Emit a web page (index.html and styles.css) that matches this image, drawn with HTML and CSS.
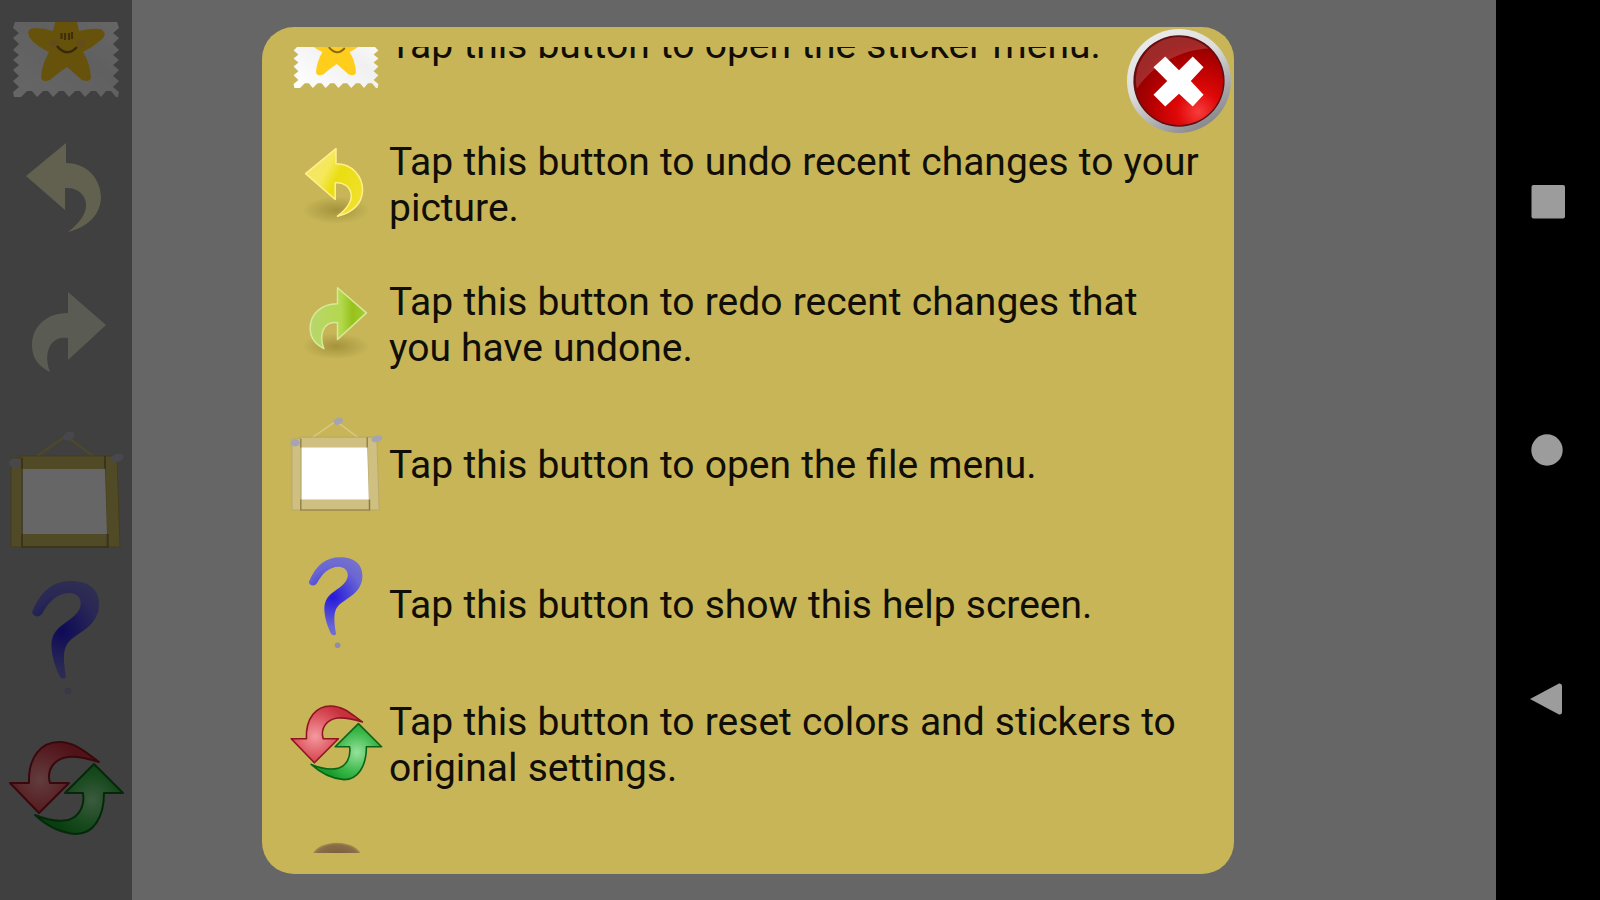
FILE: index.html
```
<!DOCTYPE html>
<html lang="en">
<head>
    <meta charset="UTF-8">
    <meta name="viewport" content="width=device-width, initial-scale=1.0">
    <title>Help</title>
    <link rel="stylesheet" href="styles.css">
</head>
<body>
    <!-- Shared icons -->
    <svg class="defs" width="0" height="0">
        <defs>
            <linearGradient id="paper" x1="0" y1="1" x2="1" y2="0">
                <stop offset="0" stop-color="#ffffff"/>
                <stop offset="0.6" stop-color="#f0f0f0"/>
                <stop offset="1" stop-color="#ffffff"/>
            </linearGradient>
            <linearGradient id="yellowArrow" x1="0" y1="0" x2="1" y2="0.6">
                <stop offset="0" stop-color="#f4e46c"/>
                <stop offset="0.4" stop-color="#f6e85c"/>
                <stop offset="0.6" stop-color="#eadd10"/>
                <stop offset="1" stop-color="#f0e02a"/>
            </linearGradient>
            <linearGradient id="greenArrow" x1="0" y1="0" x2="1" y2="0">
                <stop offset="0" stop-color="#b9d66c"/>
                <stop offset="0.55" stop-color="#b4d84e"/>
                <stop offset="0.75" stop-color="#96c21a"/>
                <stop offset="1" stop-color="#a6cc38"/>
            </linearGradient>
            <radialGradient id="shade">
                <stop offset="0" stop-color="#6e5f10" stop-opacity="0.4"/>
                <stop offset="1" stop-color="#6e5f10" stop-opacity="0"/>
            </radialGradient>
            <radialGradient id="ink" gradientUnits="userSpaceOnUse" cx="62" cy="69" r="50">
                <stop offset="0" stop-color="#2418dc"/>
                <stop offset="0.3" stop-color="#4038d8"/>
                <stop offset="0.75" stop-color="#6a66d4"/>
                <stop offset="1" stop-color="#7470cc"/>
            </radialGradient>
            <radialGradient id="red" gradientUnits="userSpaceOnUse" cx="40" cy="68" r="42">
                <stop offset="0" stop-color="#f49a9e"/>
                <stop offset="0.6" stop-color="#dc5660"/>
                <stop offset="1" stop-color="#c8323e"/>
            </radialGradient>
            <radialGradient id="green" gradientUnits="userSpaceOnUse" cx="92" cy="88" r="42">
                <stop offset="0" stop-color="#96e29c"/>
                <stop offset="0.6" stop-color="#3cb84a"/>
                <stop offset="1" stop-color="#189c2a"/>
            </radialGradient>
            <linearGradient id="rim" x1="0" y1="0" x2="0.6" y2="1">
                <stop offset="0" stop-color="#f0f0f0"/>
                <stop offset="0.5" stop-color="#dcdcdc"/>
                <stop offset="1" stop-color="#8c8c90"/>
            </linearGradient>
            <radialGradient id="closeRed" cx="0.72" cy="0.85" r="0.8">
                <stop offset="0" stop-color="#f83c3c"/>
                <stop offset="0.3" stop-color="#e00808"/>
                <stop offset="0.65" stop-color="#b80000"/>
                <stop offset="1" stop-color="#8c0000"/>
            </radialGradient>
            <radialGradient id="brown">
                <stop offset="0" stop-color="#76583c"/>
                <stop offset="0.85" stop-color="#8a6e48"/>
                <stop offset="1" stop-color="#a68c50"/>
            </radialGradient>
        </defs>

        <symbol id="icon-sticker" viewBox="0 0 132 150">
            <path fill="url(#paper)" d="M15 60H117L119 66L113 71L119 76L113 82L119 88L113 93L119 98L113 103L119 108L113 114L119 119L113 125L119 130L118 135H116L111 129H106L101 135L96 129H91L85 135L80 129H75L69 135L64 129H59L53 135L48 129H43L37 135L32 129H27L21 135H14L13 130L19 125L13 119L19 114L13 108L19 103L13 98L19 93L13 88L19 82L13 76L19 71L13 66Z"/>
            <path fill="#ffce1c" d="M55 60H77L79 69Q91 66 100 67Q109 71 101 78Q93 85 83 90Q90 101 91 115Q90 121 82 118Q74 111 67 105Q58 111 50 118Q42 121 41 115Q42 102 49 90Q36 84 30 76Q25 67 34 66Q44 66 53 69Z"/>
            <circle cx="54" cy="81" r="4.5" fill="#ffbe3c"/>
            <circle cx="81" cy="81" r="4.5" fill="#ffbe3c"/>
            <path d="M61.5 71V77M65 71V78M69 71V78M72 70V77" stroke="#a07818" stroke-width="2.2"/>
            <path d="M57 84Q67 96 77 85" fill="none" stroke="#8a6818" stroke-width="2.5"/>
        </symbol>

        <symbol id="icon-undo" viewBox="0 0 132 150">
            <ellipse class="shade" cx="66" cy="112" rx="44" ry="18" fill="url(#shade)"/>
            <path class="arrow undo" d="M26 64L66 31V51C88 51 101 68 101 86C100 103 88 115 68 120C81 110 87 100 86 91C84 80 75 75 65 76V98Z"/>
        </symbol>

        <symbol id="icon-redo" viewBox="0 0 132 150">
            <ellipse class="shade" cx="66" cy="107" rx="44" ry="17" fill="url(#shade)"/>
            <path class="arrow redo" d="M106 63L68 30V51C45 51 32 66 32 83C32 96 38 104 50 110C45 97 47 86 53 80C57 76 62 75 68 76V98Z"/>
        </symbol>

        <symbol id="icon-frame" viewBox="0 0 132 150">
            <path class="string" d="M37 44L66 24L93 44"/>
            <path class="wood" d="M20 44H110V58H20Z"/>
            <path class="wood" d="M20 121H110V135H20Z"/>
            <path class="wood" d="M11 46H22V135H11Z"/>
            <path class="wood" d="M105 44H117L120 135H107Z"/>
            <path fill="#ffffff" d="M23 57H105L107 122H23Z"/>
            <path class="edge" d="M22 46V57M22 122V135H108V122M105 44V57"/>
            <g class="nail">
                <ellipse cx="69" cy="24" rx="6" ry="4" transform="rotate(-25 69 24)"/>
                <ellipse cx="15" cy="51" rx="6" ry="4.5"/>
                <ellipse cx="117" cy="46" rx="7" ry="4" transform="rotate(-15 117 46)"/>
            </g>
        </symbol>

        <symbol id="icon-help" viewBox="0 0 132 150">
            <path fill="url(#ink)" d="M32 50C41 28 54 19 71 19C89 19 100 28 99 44C98 61 84 68 73 76C62 84 63 95 66 115Q64 118 60 115C53 101 49 83 53 74C58 63 69 60 76 52C84 44 82 32 70 31C56 31 48 41 42 52C39 56 33 55 32 50Z"/>
            <circle cx="68" cy="129" r="3.5" fill="#8c8cb4"/>
        </symbol>

        <symbol id="icon-reset" viewBox="0 0 132 150">
            <path fill="url(#red)" stroke="#8e1420" stroke-width="2" stroke-linejoin="round" d="M10 71H29C28 44 42 30 59 30C75 30 85 40 99 50C86 46 77 44 68 45C54 47 46 58 50 71H69L39 101Z"/>
            <path fill="url(#green)" stroke="#0a6418" stroke-width="2" stroke-linejoin="round" d="M94 52L123 81H104C104 106 93 122 76 122C59 121 47 114 35 103C47 108 57 110 68 108C79 105 85 94 83 81H65Z"/>
        </symbol>

        <symbol id="icon-next" viewBox="0 0 132 150">
            <ellipse cx="67" cy="44" rx="31" ry="18" fill="url(#brown)"/>
        </symbol>
    </svg>

    <div class="screen">
        <div class="app">
            <div class="toolbar">
                <svg class="tool"><use href="#icon-sticker"/></svg>
                <svg class="tool disabled"><use href="#icon-undo"/></svg>
                <svg class="tool disabled"><use href="#icon-redo"/></svg>
                <svg class="tool"><use href="#icon-frame"/></svg>
                <svg class="tool"><use href="#icon-help"/></svg>
                <svg class="tool"><use href="#icon-reset"/></svg>
            </div>
            <div class="canvas"></div>

            <!-- Help dialog over the app -->
            <div class="overlay">
                <div class="dialog">
                    <div class="scroll">
                        <ul class="help-list">
                            <li><svg class="icon sticker"><use href="#icon-sticker"/></svg><p>Tap this button to open the sticker menu.</p></li>
                            <li><svg class="icon small"><use href="#icon-undo"/></svg><p>Tap this button to undo recent changes to your picture.</p></li>
                            <li><svg class="icon small"><use href="#icon-redo"/></svg><p>Tap this button to redo recent changes that you have undone.</p></li>
                            <li><svg class="icon"><use href="#icon-frame"/></svg><p>Tap this button to open the file menu.</p></li>
                            <li><svg class="icon"><use href="#icon-help"/></svg><p>Tap this button to show this help screen.</p></li>
                            <li><svg class="icon"><use href="#icon-reset"/></svg><p>Tap this button to reset colors and stickers to original settings.</p></li>
                            <li><svg class="icon"><use href="#icon-next"/></svg></li>
                        </ul>
                    </div>
                    <button class="close" aria-label="Close">
                        <svg viewBox="0 0 108 108">
                            <circle cx="54" cy="54" r="53" fill="url(#rim)"/>
                            <circle cx="54" cy="54" r="46.5" fill="#5c1014"/>
                            <circle cx="54" cy="54" r="45" fill="url(#closeRed)"/>
                            <path fill="#ffffff" fill-opacity="0.16" d="M11 62A44 44 0 0 1 84 21C60 22 30 34 11 62Z"/>
                            <path fill="#ffffff" d="M40 29L54 43L68 29L79 40L66 54L79 68L68 80L54 67L40 80L28 68L42 54L28 40Z"/>
                        </svg>
                    </button>
                </div>
            </div>
        </div>

        <div class="navbar">
            <svg viewBox="0 0 40 40"><rect x="3.5" y="4" width="33.5" height="33.5" rx="2"/></svg>
            <svg viewBox="0 0 40 40"><circle cx="19" cy="20" r="15.7"/></svg>
            <svg viewBox="0 0 40 40"><path d="M2 20L31 4.5Q34 4 34 7V33Q34 36 31 35.5Z"/></svg>
        </div>
    </div>
</body>
</html>
```
FILE: styles.css
```
* {
    margin: 0;
    padding: 0;
    box-sizing: border-box;
}

body {
    font-family: Roboto, "Liberation Sans", sans-serif;
    background: #000;
    overflow: hidden;
}

.defs {
    position: absolute;
}

.screen {
    display: flex;
    width: 1600px;
    height: 900px;
}

.app {
    position: relative;
    display: flex;
    flex: 1;
    overflow: hidden;
}

/* Left toolbar */
.toolbar {
    display: flex;
    flex-direction: column;
    width: 132px;
    background: #a0a0a0;
}

.tool {
    flex: none;
    width: 132px;
    height: 150px;
    --wood: #c8b860;
    --wood-line: #a89848;
    --string: #c4b860;
    --nail: #b4b4be;
}

.tool:first-child {
    margin-top: -38px;
}

/* Undo and redo are greyed until there is something to undo */
.disabled {
    --undo: #f4f0c2;
    --redo: #e2e4cc;
    --arrow-line: none;
    --shade: 0;
}

.canvas {
    flex: 1;
    background: #fff;
}

/* Dialog */
.overlay {
    position: absolute;
    inset: 0;
    display: flex;
    padding: 27px 0 0 262px;
    background: rgba(0, 0, 0, 0.6);
}

.dialog {
    position: relative;
    width: 972px;
    height: 847px;
    padding: 20px 29px 21px 21px;
    background: #c7b558;
    border-radius: 32px;
}

.scroll {
    height: 100%;
    overflow: hidden;
}

.help-list {
    margin-top: -72px;
    list-style: none;
}

.help-list li {
    display: flex;
    align-items: center;
    height: 140px;
}

.help-list p {
    flex: 1;
    font-size: 39px;
    line-height: 46px;
    word-spacing: 0.5px;
    color: #100e06;
}

.icon {
    flex: none;
    width: 106px;
    height: 120px;
    margin-top: -6px;
}

.sticker {
    margin-top: -11px;
}

.small {
    transform: scale(0.95);
}

.close {
    position: absolute;
    top: 1px;
    right: 2px;
    width: 106px;
    height: 106px;
    border: none;
    background: none;
    cursor: pointer;
}

.close svg {
    display: block;
    width: 106px;
    height: 106px;
}

/* Icon parts */
.arrow {
    stroke-width: 2;
    stroke-linejoin: round;
}

.undo {
    fill: var(--undo, url(#yellowArrow));
    stroke: var(--arrow-line, #fff08a);
}

.redo {
    fill: var(--redo, url(#greenArrow));
    stroke: var(--arrow-line, #d6ea9a);
}

.shade {
    opacity: var(--shade, 1);
}

.wood {
    fill: var(--wood, #cfbf80);
    stroke: var(--wood-line, #b4a468);
    stroke-width: 1;
}

.string {
    fill: none;
    stroke: var(--string, #d8c880);
    stroke-width: 2;
}

.edge {
    fill: none;
    stroke: #8a7a44;
    stroke-width: 1.5;
}

.nail {
    fill: var(--nail, #a4a4b4);
}

/* Android navigation bar */
.navbar {
    display: flex;
    flex-direction: column;
    justify-content: space-between;
    align-items: center;
    width: 104px;
    padding: 181px 0;
    background: #000;
}

.navbar svg {
    width: 40px;
    height: 40px;
    fill: #9c9c9c;
}
```
